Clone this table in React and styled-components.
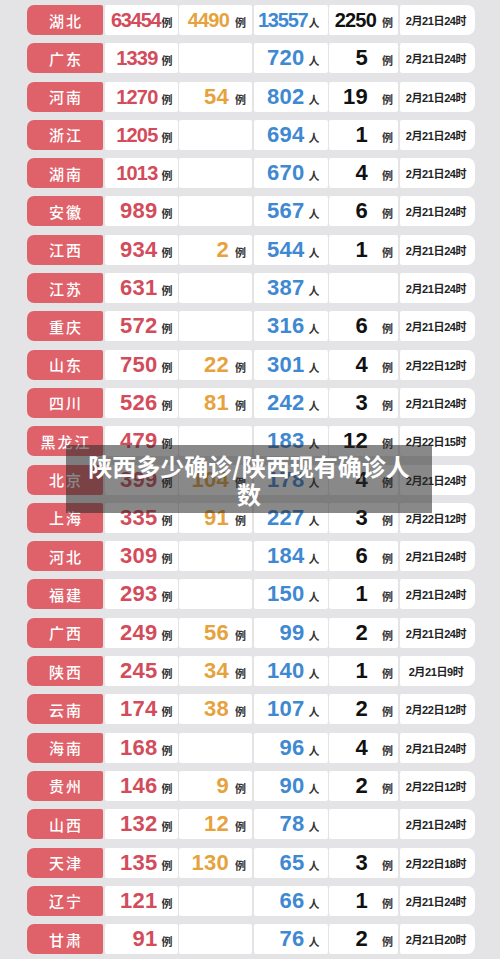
import React from "react";
import styled, { createGlobalStyle } from "styled-components";

const GlobalStyle = createGlobalStyle`
  html, body {
    margin: 0;
    padding: 0;
    background: #e4e4e6;
  }
`;

const rows = [
  ["湖北", "63454", "4490", "13557", "2250", "2月21日24时"],
  ["广东", "1339", "", "720", "5", "2月21日24时"],
  ["河南", "1270", "54", "802", "19", "2月21日24时"],
  ["浙江", "1205", "", "694", "1", "2月21日24时"],
  ["湖南", "1013", "", "670", "4", "2月21日24时"],
  ["安徽", "989", "", "567", "6", "2月21日24时"],
  ["江西", "934", "2", "544", "1", "2月21日24时"],
  ["江苏", "631", "", "387", "", "2月21日24时"],
  ["重庆", "572", "", "316", "6", "2月21日24时"],
  ["山东", "750", "22", "301", "4", "2月22日12时"],
  ["四川", "526", "81", "242", "3", "2月21日24时"],
  ["黑龙江", "479", "", "183", "12", "2月22日15时"],
  ["北京", "399", "104", "178", "4", "2月21日24时"],
  ["上海", "335", "91", "227", "3", "2月22日12时"],
  ["河北", "309", "", "184", "6", "2月21日24时"],
  ["福建", "293", "", "150", "1", "2月21日24时"],
  ["广西", "249", "56", "99", "2", "2月21日24时"],
  ["陕西", "245", "34", "140", "1", "2月21日9时"],
  ["云南", "174", "38", "107", "2", "2月22日12时"],
  ["海南", "168", "", "96", "4", "2月21日24时"],
  ["贵州", "146", "9", "90", "2", "2月22日12时"],
  ["山西", "132", "12", "78", "", "2月21日24时"],
  ["天津", "135", "130", "65", "3", "2月22日18时"],
  ["辽宁", "121", "", "66", "1", "2月21日24时"],
  ["甘肃", "91", "", "76", "2", "2月21日20时"],
];

const Page = styled.div`
  position: relative;
  width: 500px;
  padding: 5px 0 6px 27px;
  box-sizing: border-box;
  font-family: "Liberation Sans", "Noto Sans CJK SC", sans-serif;
`;

const Table = styled.div`
  display: flex;
  flex-direction: column;
  gap: 8.3px;
`;

const Row = styled.div`
  display: grid;
  grid-template-columns: 76px 73px 73px 74px 69px 75px;
  column-gap: 1.5px;
  height: 30px;
`;

const Name = styled.div`
  background: #df626a;
  border-radius: 7px 2px 2px 7px;
  color: #fff;
  font-family: "Noto Sans CJK SC", sans-serif;
  font-weight: 500;
  font-size: 15px;
  letter-spacing: 2px;
  display: flex;
  align-items: center;
  justify-content: center;
  padding-left: 2px;
`;

const Cell = styled.div`
  background: #fff;
  border-radius: ${(p) => (p.$last ? "2px 8px 8px 2px" : "2px")};
  display: flex;
  align-items: center;
  justify-content: flex-end;
  padding-right: ${(p) => p.$pr}px;
  box-sizing: border-box;
`;

const Num = styled.span`
  font-weight: 700;
  font-size: ${(p) => (p.$len >= 4 ? 20 : 22)}px;
  color: ${(p) => p.$color};
  letter-spacing: ${(p) => (p.$len >= 5 ? "-1.2px" : p.$len === 4 ? "-0.8px" : "0.3px")};
  margin-right: ${(p) => p.$gap}px;
  line-height: 1;
`;

const Unit = styled.span`
  font-family: "Noto Sans CJK SC", sans-serif;
  font-weight: 700;
  font-size: 11px;
  color: #333;
  margin-top: 4px;
`;

const DateCell = styled(Cell)`
  justify-content: center;
  padding-right: 2px;
  font-family: "Liberation Sans", "Noto Sans CJK SC", sans-serif;
  font-weight: 700;
  font-size: 11px;
  letter-spacing: -0.4px;
  color: #222;
`;

const Overlay = styled.div`
  position: absolute;
  left: 66px;
  top: 445px;
  width: 366px;
  height: 68px;
  background: rgba(40, 40, 40, 0.55);
  color: #fff;
  font-family: "Noto Sans CJK SC", sans-serif;
  font-weight: 700;
  font-size: 24px;
  line-height: 28px;
  text-align: center;
  padding: 7px 12px 0;
  box-sizing: border-box;
`;

function NumCell({ value, color, unit, pr, gap, wideGap }) {
  const g = value.length >= 4 && wideGap !== undefined ? wideGap : gap;
  return (
    <Cell $pr={pr}>
      {value && (
        <>
          <Num $color={color} $gap={g} $len={value.length}>
            {value}
          </Num>
          <Unit>{unit}</Unit>
        </>
      )}
    </Cell>
  );
}

export default function App() {
  return (
    <Page>
      <GlobalStyle />
      <Table>
        {rows.map((r) => (
          <Row key={r[0]}>
            <Name>{r[0]}</Name>
            <NumCell value={r[1]} color="#d34c5b" unit="例" pr={5} gap={r[1].length >= 5 ? 1 : 4} />
            <NumCell value={r[2]} color="#e6a23c" unit="例" pr={6} gap={6} />
            <NumCell value={r[3]} color="#3f88d2" unit="人" pr={8} gap={r[3].length >= 5 ? 1 : 4} />
            <NumCell value={r[4]} color="#111" unit="例" pr={5} gap={14} wideGap={6} />
            <DateCell $last>{r[5]}</DateCell>
          </Row>
        ))}
      </Table>
      <Overlay>陕西多少确诊/陕西现有确诊人数</Overlay>
    </Page>
  );
}
